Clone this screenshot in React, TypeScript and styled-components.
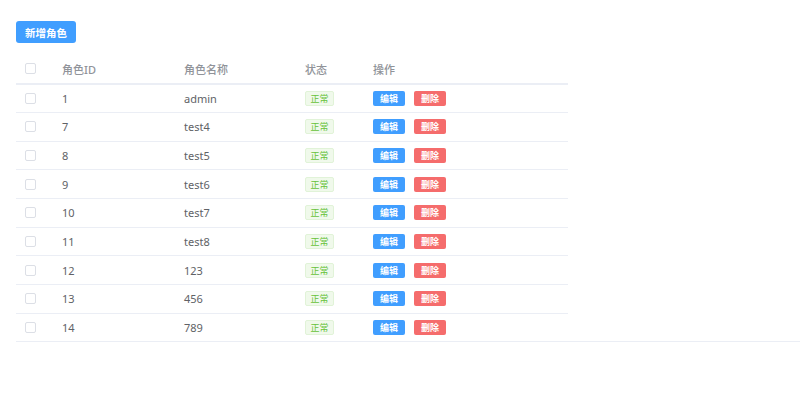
import * as React from 'react';
import styled, { createGlobalStyle } from 'styled-components';

type TRole = {
    id: number;
    name: string;
}

const roles: TRole[] = [
    { id: 1, name: 'admin' },
    { id: 7, name: 'test4' },
    { id: 8, name: 'test5' },
    { id: 9, name: 'test6' },
    { id: 10, name: 'test7' },
    { id: 11, name: 'test8' },
    { id: 12, name: '123' },
    { id: 13, name: '456' },
    { id: 14, name: '789' },
];

const GlobalStyle = createGlobalStyle`
html, body {
    margin: 0;
    padding: 0;
    background: #fff;
}
body {
    font-family: "Noto Sans", "Noto Sans CJK SC", sans-serif;
}
`;

const CSSPage = styled.div`
padding: 21px 0 0 16px;
`;

const CSSAddButton = styled.button`
display: flex;
align-items: center;
justify-content: center;
width: 60px;
height: 22px;
padding: 0;
border: none;
border-radius: 3px;
background-color: #409eff;
color: white;
font-family: "Noto Sans CJK SC", sans-serif;
font-size: 10.5px;
font-weight: 700;
`;

const CSSTable = styled.div`
margin-top: 12px;
border-bottom: 1px solid #ebeef5;
`;

const CSSRow = styled.div<{ header?: boolean }>`
display: grid;
grid-template-columns: 36px 122px 121px 68px 205px;
width: 552px;
height: ${props => props.header ? '28.5px' : '28.67px'};
box-sizing: border-box;
align-items: center;
border-bottom: ${props => props.header ? '1px solid #ebeef5' : 'none'};
& + & {
    border-top: 1px solid #ebeef5;
}
font-size: 11px;
font-weight: ${props => props.header ? 500 : 400};
color: ${props => props.header ? '#909399' : '#606266'};
`;

const CSSCell = styled.div`
display: flex;
align-items: center;
gap: 9px;
padding-left: 10px;
white-space: nowrap;
`;

const CSSCheckCell = styled.div`
display: flex;
align-items: center;
padding-left: 9px;
`;

const CSSCheckbox = styled.span`
display: block;
width: 9px;
height: 9px;
border: 1px solid #dcdfe6;
border-radius: 2px;
background: #fff;
`;

const CSSTag = styled.span`
display: flex;
align-items: center;
justify-content: center;
width: 29px;
height: 15px;
box-sizing: border-box;
border: 1px solid #e1f3d8;
border-radius: 2px;
background-color: #f0f9eb;
color: #67c23a;
font-family: "Noto Sans CJK SC", sans-serif;
font-size: 9px;
`;

const CSSActionButton = styled.button<{ danger?: boolean }>`
display: flex;
align-items: center;
justify-content: center;
width: 32px;
height: 15px;
padding: 0;
border: none;
border-radius: 2px;
background-color: ${props => props.danger ? '#f56c6c' : '#409eff'};
color: white;
font-family: "Noto Sans CJK SC", sans-serif;
font-size: 9px;
font-weight: 700;
`;

const App: React.FC = () => {
    return (<>
        <GlobalStyle />
        <CSSPage>
            <CSSAddButton>新增角色</CSSAddButton>
            <CSSTable>
                <CSSRow header>
                    <CSSCheckCell><CSSCheckbox /></CSSCheckCell>
                    <CSSCell>角色ID</CSSCell>
                    <CSSCell>角色名称</CSSCell>
                    <CSSCell>状态</CSSCell>
                    <CSSCell>操作</CSSCell>
                </CSSRow>
                {roles.map(role => (
                    <CSSRow key={role.id}>
                        <CSSCheckCell><CSSCheckbox /></CSSCheckCell>
                        <CSSCell>{role.id}</CSSCell>
                        <CSSCell>{role.name}</CSSCell>
                        <CSSCell><CSSTag>正常</CSSTag></CSSCell>
                        <CSSCell>
                            <CSSActionButton>编辑</CSSActionButton>
                            <CSSActionButton danger>删除</CSSActionButton>
                        </CSSCell>
                    </CSSRow>
                ))}
            </CSSTable>
        </CSSPage>
    </>)
}

export default App
